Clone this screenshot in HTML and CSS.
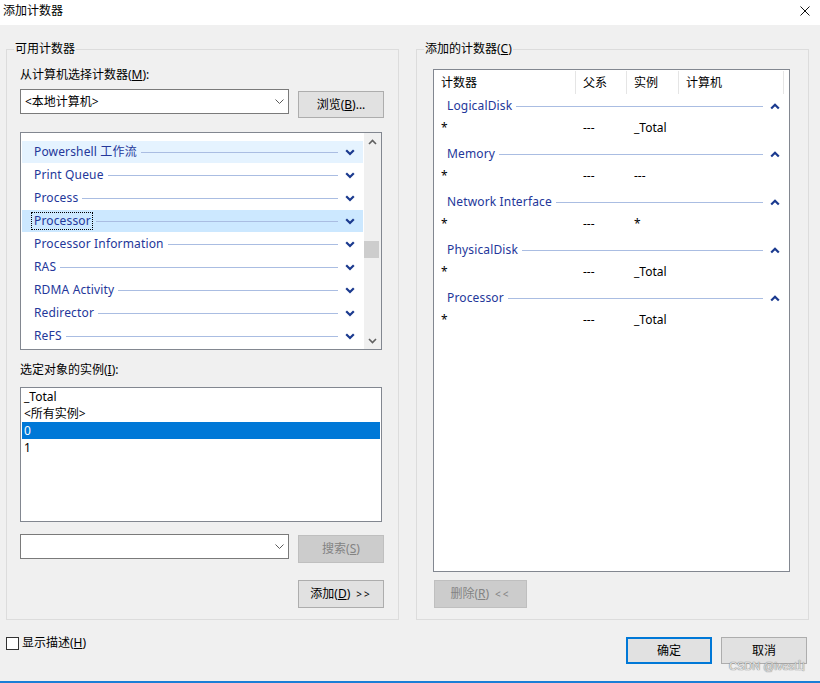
FILE: index.html
```html
<!DOCTYPE html>
<html lang="zh-CN">
<head>
<meta charset="utf-8">
<title>添加计数器</title>
<link rel="stylesheet" href="styles.css">
</head>
<body>
<div class="window">
  <header class="titlebar">
    <span class="title">添加计数器</span>
    <svg class="close" viewBox="0 0 10 10" width="10" height="10"><path d="M0.5 0.5 9.5 9.5 M9.5 0.5 0.5 9.5"/></svg>
  </header>

  <main class="content">
    <div class="panels">
      <section class="group group-left">
        <span class="group-title">可用计数器</span>
        <div class="field-label">从计算机选择计数器(<u>M</u>):</div>
        <div class="row row-machine">
          <div class="combo"><span class="combo-text">&lt;本地计算机&gt;</span><svg class="combo-arrow" viewBox="0 0 9 5" width="9" height="5"><path d="M0.5 0.5 4.5 4.5 8.5 0.5"/></svg></div>
          <button class="btn btn-browse">浏览(<u>B</u>)...</button>
        </div>

        <div class="counter-list">
          <div class="counter-items">
            <div class="counter is-hover"><span class="counter-name">Powershell 工作流</span><span class="rule"></span><svg class="chev" viewBox="0 0 10 7" width="10" height="7"><path d="M1.2 1.2 5 5 8.8 1.2"/></svg></div>
            <div class="counter"><span class="counter-name">Print Queue</span><span class="rule"></span><svg class="chev" viewBox="0 0 10 7" width="10" height="7"><path d="M1.2 1.2 5 5 8.8 1.2"/></svg></div>
            <div class="counter"><span class="counter-name">Process</span><span class="rule"></span><svg class="chev" viewBox="0 0 10 7" width="10" height="7"><path d="M1.2 1.2 5 5 8.8 1.2"/></svg></div>
            <div class="counter is-selected"><span class="counter-name is-focus">Processor</span><span class="rule"></span><svg class="chev" viewBox="0 0 10 7" width="10" height="7"><path d="M1.2 1.2 5 5 8.8 1.2"/></svg></div>
            <div class="counter"><span class="counter-name">Processor Information</span><span class="rule"></span><svg class="chev" viewBox="0 0 10 7" width="10" height="7"><path d="M1.2 1.2 5 5 8.8 1.2"/></svg></div>
            <div class="counter"><span class="counter-name">RAS</span><span class="rule"></span><svg class="chev" viewBox="0 0 10 7" width="10" height="7"><path d="M1.2 1.2 5 5 8.8 1.2"/></svg></div>
            <div class="counter"><span class="counter-name">RDMA Activity</span><span class="rule"></span><svg class="chev" viewBox="0 0 10 7" width="10" height="7"><path d="M1.2 1.2 5 5 8.8 1.2"/></svg></div>
            <div class="counter"><span class="counter-name">Redirector</span><span class="rule"></span><svg class="chev" viewBox="0 0 10 7" width="10" height="7"><path d="M1.2 1.2 5 5 8.8 1.2"/></svg></div>
            <div class="counter"><span class="counter-name">ReFS</span><span class="rule"></span><svg class="chev" viewBox="0 0 10 7" width="10" height="7"><path d="M1.2 1.2 5 5 8.8 1.2"/></svg></div>
          </div>
          <div class="vscroll">
            <div class="scroll-btn"><svg viewBox="0 0 9 6" width="9" height="6"><path d="M1 5 4.5 1.5 8 5"/></svg></div>
            <div class="scroll-track"><div class="scroll-thumb"></div></div>
            <div class="scroll-btn"><svg viewBox="0 0 9 6" width="9" height="6"><path d="M1 1 4.5 4.5 8 1"/></svg></div>
          </div>
        </div>

        <div class="field-label label-instances">选定对象的实例(<u>I</u>):</div>
        <div class="instance-list">
          <div class="instance">_Total</div>
          <div class="instance">&lt;所有实例&gt;</div>
          <div class="instance is-selected">0</div>
          <div class="instance">1</div>
        </div>

        <div class="row row-search">
          <div class="combo"><span class="combo-text"></span><svg class="combo-arrow" viewBox="0 0 9 5" width="9" height="5"><path d="M0.5 0.5 4.5 4.5 8.5 0.5"/></svg></div>
          <button class="btn btn-search" disabled>搜索(<u>S</u>)</button>
        </div>

        <div class="row row-add">
          <button class="btn btn-add">添加(<u>D</u>) <span class="arrows">&gt;&gt;</span></button>
        </div>
      </section>

      <section class="group group-right">
        <span class="group-title">添加的计数器(<u>C</u>)</span>
        <div class="listview">
          <div class="lv-header">
            <div class="lv-col">计数器</div>
            <div class="lv-col">父系</div>
            <div class="lv-col">实例</div>
            <div class="lv-col">计算机</div>
          </div>
          <div class="lv-body">
            <div class="lv-group">
              <div class="lv-group-header"><span class="lv-group-name">LogicalDisk</span><span class="rule"></span><svg class="chev" viewBox="0 0 10 7" width="10" height="7"><path d="M1.2 5.5 5 1.7 8.8 5.5"/></svg></div>
              <div class="lv-item"><span>*</span><span>---</span><span>_Total</span><span></span></div>
            </div>
            <div class="lv-group">
              <div class="lv-group-header"><span class="lv-group-name">Memory</span><span class="rule"></span><svg class="chev" viewBox="0 0 10 7" width="10" height="7"><path d="M1.2 5.5 5 1.7 8.8 5.5"/></svg></div>
              <div class="lv-item"><span>*</span><span>---</span><span>---</span><span></span></div>
            </div>
            <div class="lv-group">
              <div class="lv-group-header"><span class="lv-group-name">Network Interface</span><span class="rule"></span><svg class="chev" viewBox="0 0 10 7" width="10" height="7"><path d="M1.2 5.5 5 1.7 8.8 5.5"/></svg></div>
              <div class="lv-item"><span>*</span><span>---</span><span>*</span><span></span></div>
            </div>
            <div class="lv-group">
              <div class="lv-group-header"><span class="lv-group-name">PhysicalDisk</span><span class="rule"></span><svg class="chev" viewBox="0 0 10 7" width="10" height="7"><path d="M1.2 5.5 5 1.7 8.8 5.5"/></svg></div>
              <div class="lv-item"><span>*</span><span>---</span><span>_Total</span><span></span></div>
            </div>
            <div class="lv-group">
              <div class="lv-group-header"><span class="lv-group-name">Processor</span><span class="rule"></span><svg class="chev" viewBox="0 0 10 7" width="10" height="7"><path d="M1.2 5.5 5 1.7 8.8 5.5"/></svg></div>
              <div class="lv-item"><span>*</span><span>---</span><span>_Total</span><span></span></div>
            </div>
          </div>
        </div>
        <div class="row row-remove">
          <button class="btn btn-remove" disabled>删除(<u>R</u>) <span class="arrows">&lt;&lt;</span></button>
        </div>
      </section>
    </div>

    <div class="footer">
      <label class="checkbox"><span class="check-box"></span><span>显示描述(<u>H</u>)</span></label>
      <div class="footer-buttons">
        <button class="btn btn-ok">确定</button>
        <button class="btn btn-cancel">取消</button>
      </div>
    </div>
  </main>

  <div class="watermark">CSDN @ives山</div>
</div>
</body>
</html>
```

FILE: styles.css
```css
* { box-sizing: border-box; }

html, body {
  margin: 0;
  padding: 0;
}

body {
  font-family: "Noto Sans", "Noto Sans CJK SC", sans-serif;
  font-size: 12px;
  color: #000;
  background: #f0f0f0;
}

u { text-decoration: underline; text-underline-offset: 1px; }

.window {
  position: relative;
  width: 820px;
  height: 683px;
  background: #f0f0f0;
  border-bottom: 2px solid #1a7ed6;
  display: flex;
  flex-direction: column;
  overflow: hidden;
}

/* title bar */
.titlebar {
  height: 25px;
  background: #fff;
  display: flex;
  align-items: flex-start;
  justify-content: space-between;
  padding: 0 10px 0 3px;
  flex: none;
}
.title {
  line-height: 20px;
  font-family: "Noto Sans CJK SC", sans-serif;
}
.close {
  margin-top: 6px;
  fill: none;
  stroke: #111;
  stroke-width: 1;
}

/* content */
.content {
  padding: 24px 0 0 6px;
  flex: 1;
  display: flex;
  flex-direction: column;
}
.panels {
  display: flex;
  gap: 17px;
}
.group {
  position: relative;
  width: 393px;
  height: 571px;
  border: 1px solid #dcdcdc;
}
.group-left { padding: 17px 14px 0 13px; }
.group-right { padding: 19px 0 0 16px; }

.group-title {
  position: absolute;
  top: -9px;
  left: 7px;
  padding: 0 1px;
  line-height: 16px;
  background: #f0f0f0;
}

.field-label {
  line-height: 16px;
  white-space: nowrap;
}
.label-instances { margin-top: 12px; }

.row {
  display: flex;
  align-items: flex-start;
}
.row-machine { margin-top: 6px; gap: 9px; }
.row-search { margin-top: 12px; gap: 9px; }
.row-add { margin-top: 17px; justify-content: flex-end; }
.row-remove { margin-top: 8px; padding-left: 1px; }

/* combobox */
.combo {
  width: 269px;
  height: 25px;
  background: #fff;
  border: 1px solid #7a7a7a;
  display: flex;
  align-items: center;
  justify-content: space-between;
  padding: 0 4px 0 4px;
}
.combo-text { line-height: 16px; }
.combo-arrow {
  fill: none;
  stroke: #5a5a5a;
  stroke-width: 1;
}

/* buttons */
.btn {
  font: inherit;
  color: #000;
  background: #e1e1e1;
  border: 1px solid #adadad;
  padding: 0;
  height: 28px;
  width: 86px;
  line-height: 16px;
  display: flex;
  align-items: center;
  justify-content: center;
}
.btn[disabled] {
  background: #cccccc;
  border-color: #bfbfbf;
  color: #838383;
}
.btn-browse { height: 27px; margin-top: 2px; }
.btn-search { margin-top: 1px; }
.btn-remove { width: 93px; }
.arrows { margin-left: 6px; font-size: 10px; word-spacing: 0; letter-spacing: 2px; }

/* counter list */
.counter-list {
  margin-top: 14px;
  width: 362px;
  height: 218px;
  background: #fff;
  border: 1px solid #828790;
  display: flex;
}
.counter-items {
  flex: 1;
  padding-top: 8px;
  overflow: hidden;
}
.counter {
  display: flex;
  align-items: center;
  height: 22px;
  margin: 0 1px 1px 1px;
  padding: 0 8px 0 12px;
}
.counter.is-hover { background: #e5f3ff; }
.counter.is-selected { background: #cce8ff; }
.counter-name,
.lv-group-name {
  color: #24379a;
  white-space: nowrap;
  line-height: 16px;
  letter-spacing: 0.15px;
}
.counter-name.is-focus {
  outline: 1px dotted #000;
  outline-offset: 0;
  margin-left: -2px;
  padding: 0 1px 0 2px;
}
.rule {
  flex: 1;
  height: 1px;
  background: #aabde2;
  margin: 0 7px 0 4px;
}
.chev {
  flex: none;
  fill: none;
  stroke: #1b3a8f;
  stroke-width: 2.2;
}

.vscroll {
  width: 17px;
  background: #f0f0f0;
  display: flex;
  flex-direction: column;
  flex: none;
}
.scroll-btn {
  height: 17px;
  display: flex;
  align-items: center;
  justify-content: center;
}
.scroll-btn svg {
  fill: none;
  stroke: #606060;
  stroke-width: 1.6;
}
.scroll-track {
  flex: 1;
  padding-top: 91px;
}
.scroll-thumb {
  height: 17px;
  margin: 0 2px 0 0;
  background: #cdcdcd;
}

/* instances */
.instance-list {
  margin-top: 9px;
  width: 362px;
  height: 135px;
  background: #fff;
  border: 1px solid #828790;
}
.instance {
  height: 17px;
  line-height: 17px;
  margin: 0 1px;
  padding-left: 2px;
}
.instance.is-selected {
  background: #0078d7;
  color: #fff;
}

/* right listview */
.listview {
  width: 357px;
  height: 503px;
  background: #fff;
  border: 1px solid #828790;
}
.lv-header {
  display: grid;
  grid-template-columns: 142px 51px 52px 105px;
  height: 25px;
}
.lv-col {
  border-right: 1px solid #e5e5e5;
  padding-left: 7px;
  margin: 1px 0;
  line-height: 23px;
}
.lv-body { padding-top: 1px; }
.lv-group { margin-bottom: 4px; }
.lv-group-header {
  display: flex;
  align-items: center;
  height: 20px;
  padding: 0 9px 0 13px;
}
.lv-item {
  display: grid;
  grid-template-columns: 142px 51px 52px 105px;
  height: 24px;
  line-height: 24px;
}
.lv-item span { padding-left: 7px; }

/* footer */
.footer {
  margin-top: 17px;
  display: flex;
  justify-content: space-between;
  align-items: flex-start;
  padding-right: 13px;
}
.checkbox {
  display: flex;
  align-items: center;
  gap: 3px;
  line-height: 16px;
  margin-top: -2px;
}
.check-box {
  width: 13px;
  height: 13px;
  border: 1px solid #333;
  background: #fff;
}
.footer-buttons {
  display: flex;
  gap: 9px;
}
.btn-ok {
  height: 27px;
  border: 2px solid #0078d7;
}
.btn-cancel { height: 27px; }

.watermark {
  position: absolute;
  right: 15px;
  bottom: 9px;
  font-family: "Liberation Sans", sans-serif;
  font-size: 11px;
  line-height: 12px;
  color: #e6e6e6;
  text-shadow: 0 0 1px #777, 0 0 1px #777;
}
```
